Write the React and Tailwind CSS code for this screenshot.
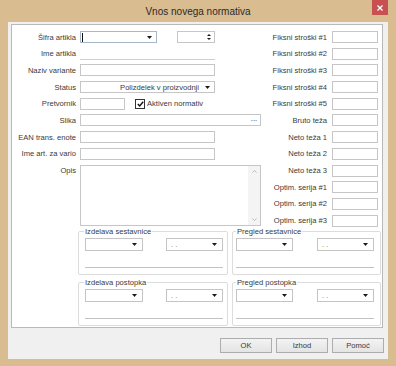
import React from "react";

function Arrow() {
  return (
    <svg width="5" height="3" viewBox="0 0 5 3" className="shrink-0">
      <path d="M0 0H5L2.5 3Z" fill="#1a1a1a" />
    </svg>
  );
}

function Lbl({ children }) {
  return <div className="flex items-center justify-end whitespace-nowrap">{children}</div>;
}

function Box({ className }) {
  return <div className={"h-full bg-white border border-[#c6c6c6] " + className} />;
}

function SmallCombo({ className, dots }) {
  return (
    <div className={"h-[13px] bg-white border border-[#c4c4c4] flex items-center justify-between pl-[4px] pr-[5px] " + className}>
      <span className="text-[#777] leading-[9px]">{dots ? ". ." : ""}</span>
      <Arrow />
    </div>
  );
}

function Group({ title, className, contentClass, leftW, rightClass }) {
  return (
    <fieldset className={"border border-[#dcdcdc] rounded-[2px] pb-[6px] " + className}>
      <legend className="px-[1px] leading-[9px]">{title}</legend>
      <div className={contentClass}>
        <div className="flex justify-between mt-[2px]">
          <SmallCombo className={leftW} />
          <SmallCombo className={rightClass} dots />
        </div>
        <div className="mt-[16px] border-t border-[#c2c2c2]" />
      </div>
    </fieldset>
  );
}

export default function App() {
  return (
    <div className="w-[396px] h-[366px] bg-[#d9bc90] flex flex-col font-['Liberation_Sans',Arial,sans-serif] text-[7.6px] leading-[9px] text-[#3a3a3a] overflow-hidden">
      {/* Title bar */}
      <div className="h-[22px] flex shrink-0">
        <div className="w-[24px]" />
        <div className="flex-1 flex items-center justify-center text-[10px] text-[#2a2a2a] pt-[1px]">
          Vnos novega normativa
        </div>
        <div className="w-[16px] h-[15px] bg-[#c75050] flex items-center justify-center">
          <svg width="6" height="6" viewBox="0 0 6 6">
            <path d="M0.5 0.5L5.5 5.5M5.5 0.5L0.5 5.5" stroke="#fff" strokeWidth="1.4" />
          </svg>
        </div>
        <div className="w-[8px]" />
      </div>

      {/* Panel */}
      <div className="mx-[8px] h-[337px] bg-[#f0f0f0] flex flex-col shrink-0">
        <div className="ml-[3px] mt-[2px] w-[372px] h-[304px] bg-white border border-[#b9b9b9] pt-[6px]">
          <div className="flex">
            {/* Left grid */}
            <div className="grid grid-cols-[64px_181px] gap-x-[4px] grid-rows-[repeat(12,12px)] gap-y-[4.7px]">
              <Lbl>Šifra artikla</Lbl>
              <div className="flex h-full">
                <div className="w-[77px] h-full bg-white border border-[#a7b6c9] flex items-center justify-between pl-[1px] pr-[4px]">
                  <div className="w-[1px] h-[9px] bg-[#111]" />
                  <Arrow />
                </div>
                <div className="ml-[20px] w-[38px] h-full bg-white border border-[#c6c6c6] flex items-center justify-end pr-[3px]">
                  <div className="flex flex-col gap-[2px]">
                    <svg width="4" height="2" viewBox="0 0 4 2"><path d="M0 2H4L2 0Z" fill="#1a1a1a" /></svg>
                    <svg width="4" height="2" viewBox="0 0 4 2"><path d="M0 0H4L2 2Z" fill="#1a1a1a" /></svg>
                  </div>
                </div>
              </div>

              <Lbl>Ime artikla</Lbl>
              <div className="w-[135px] h-full border-b border-[#cfcfcf]" />

              <Lbl>Naziv variante</Lbl>
              <Box className="w-[135px]" />

              <Lbl>Status</Lbl>
              <div className="w-[135px] h-full bg-white border border-[#c6c6c6] flex items-center justify-end pr-[4px] gap-[6px]">
                <span className="whitespace-nowrap">Polizdelek v proizvodnji</span>
                <Arrow />
              </div>

              <Lbl>Pretvornik</Lbl>
              <div className="flex items-center h-full">
                <Box className="w-[45px]" />
                <div className="ml-[10px] w-[10px] h-[10px] border border-[#333] bg-white flex items-center justify-center">
                  <svg width="7" height="6" viewBox="0 0 7 6">
                    <path d="M0.8 3L2.7 4.9L6.2 0.8" stroke="#111" strokeWidth="1.4" fill="none" />
                  </svg>
                </div>
                <span className="ml-[2px] whitespace-nowrap">Aktiven normativ</span>
              </div>

              <Lbl>Slika</Lbl>
              <div className="w-[181px] h-full bg-white border border-[#c6c6c6] flex items-center justify-end">
                <div className="w-[12px] h-full flex items-center justify-center text-[#333] leading-[6px] pb-[2px]">...</div>
              </div>

              <Lbl>EAN trans. enote</Lbl>
              <Box className="w-[135px]" />

              <Lbl>Ime art. za vario</Lbl>
              <Box className="w-[135px]" />

              <div className="row-start-9 col-start-1 flex items-center justify-end">Opis</div>
              <div className="row-start-9 col-start-2 row-span-4 w-[181px] h-[61px] bg-white border border-[#c6c6c6] flex justify-end">
                <div className="w-[12px] h-full bg-[#f4f4f4] flex flex-col items-center justify-between py-[4px]">
                  <svg width="5" height="3" viewBox="0 0 5 3"><path d="M0.5 2.5L2.5 0.5L4.5 2.5" stroke="#bbb" fill="none" /></svg>
                  <svg width="5" height="3" viewBox="0 0 5 3"><path d="M0.5 0.5L2.5 2.5L4.5 0.5" stroke="#bbb" fill="none" /></svg>
                </div>
              </div>
            </div>

            {/* Right grid */}
            <div className="grid grid-cols-[66px_46px] gap-x-[5px] grid-rows-[repeat(12,12px)] gap-y-[4.7px]">
              <Lbl>Fiksni stroški #1</Lbl>
              <Box className="w-[46px]" />
              <Lbl>Fiksni stroški #2</Lbl>
              <Box className="w-[46px]" />
              <Lbl>Fiksni stroški #3</Lbl>
              <Box className="w-[46px]" />
              <Lbl>Fiksni stroški #4</Lbl>
              <Box className="w-[46px]" />
              <Lbl>Fiksni stroški #5</Lbl>
              <Box className="w-[46px]" />
              <Lbl>Bruto teža</Lbl>
              <Box className="w-[46px]" />
              <Lbl>Neto teža 1</Lbl>
              <Box className="w-[46px]" />
              <Lbl>Neto teža 2</Lbl>
              <Box className="w-[46px]" />
              <Lbl>Neto teža 3</Lbl>
              <Box className="w-[46px]" />
              <Lbl>Optim. serija #1</Lbl>
              <Box className="w-[46px]" />
              <Lbl>Optim. serija #2</Lbl>
              <Box className="w-[46px]" />
              <Lbl>Optim. serija #3</Lbl>
              <Box className="w-[46px]" />
            </div>
          </div>

          {/* Group boxes */}
          <div className="flex gap-[4px] ml-[66px]">
            <div className="w-[150px] flex flex-col">
              <Group title="Izdelava sestavnice" className="pl-[5px] pr-[4px]" contentClass="pl-[1px]" leftW="w-[58px]" rightClass="w-[57px]" />
              <Group title="Izdelava postopka" className="pl-[5px] pr-[4px] mt-[3px]" contentClass="pl-[1px]" leftW="w-[58px]" rightClass="w-[57px]" />
            </div>
            <div className="w-[149px] flex flex-col">
              <Group title="Pregled sestavnice" className="pl-[3px] pr-[6px]" contentClass="" leftW="w-[57px]" rightClass="w-[57px]" />
              <Group title="Pregled postopka" className="pl-[3px] pr-[6px] mt-[3px]" contentClass="" leftW="w-[57px]" rightClass="w-[57px]" />
            </div>
          </div>
        </div>

        {/* Buttons */}
        <div className="flex justify-end gap-[4px] pr-[4px] mt-[10px]">
          <div className="w-[52px] h-[15px] border border-[#adadad] bg-linear-to-b from-[#f3f3f3] to-[#e4e4e4] flex items-center justify-center">OK</div>
          <div className="w-[52px] h-[15px] border border-[#adadad] bg-linear-to-b from-[#f3f3f3] to-[#e4e4e4] flex items-center justify-center">Izhod</div>
          <div className="w-[52px] h-[15px] border border-[#adadad] bg-linear-to-b from-[#f3f3f3] to-[#e4e4e4] flex items-center justify-center">Pomoć</div>
        </div>
      </div>
    </div>
  );
}
